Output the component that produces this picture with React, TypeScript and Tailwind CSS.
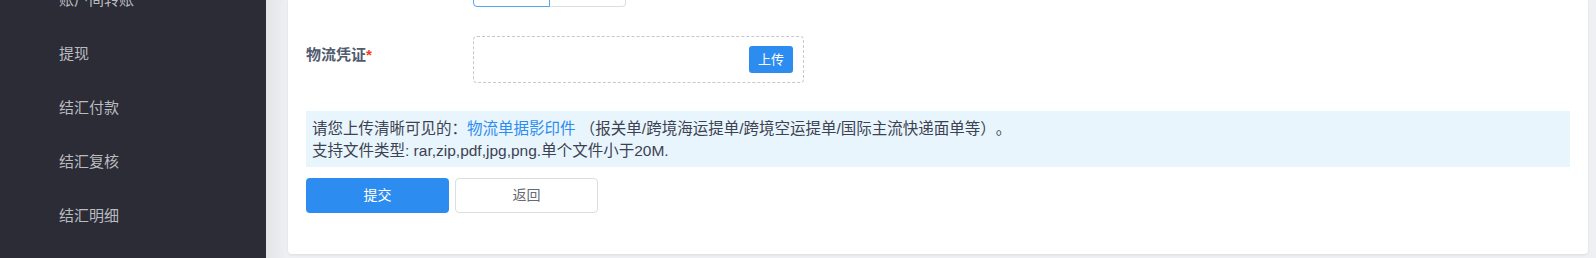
const menu = ["账户间转账", "提现", "结汇付款", "结汇复核", "结汇明细"]

export default function App() {
  return (
    <div className="flex h-[258px] w-[1596px] overflow-hidden font-['Liberation_Sans','Noto_Sans_CJK_SC',sans-serif]">
      {/* Sidebar */}
      <aside className="w-[266px] shrink-0 bg-[#2b2c35]">
        <ul className="-mt-[27px]">
          {menu.map((item) => (
            <li
              key={item}
              className="flex h-[54px] items-center pl-[59px] text-[15px] text-[#babbc0]"
            >
              {item}
            </li>
          ))}
        </ul>
      </aside>

      {/* Content */}
      <main className="flex-1 bg-[linear-gradient(to_right,#e3e4e8,#eef0f3_22px)] pr-[8px] pb-[4px] pl-[22px]">
        <div className="flex h-full flex-col rounded-b-[4px] bg-white pr-[18px] pl-[18px] shadow-[0_1px_3px_rgba(0,0,0,0.08)]">
          {/* previous field (cut off at top) */}
          <div className="-mt-[25px] flex pl-[167px]">
            <div className="flex h-[32px]">
              <div className="w-[77px] rounded-l-[4px] border border-[#57a3f3] bg-white" />
              <div className="w-[76px] rounded-r-[4px] border border-l-0 border-[#dcdee2] bg-white" />
            </div>
          </div>

          {/* 物流凭证 */}
          <div className="mt-[29px] flex">
            <label className="w-[167px] shrink-0 pt-[8px] text-[15px] leading-[22px] font-bold text-[#515a6e]">
              物流凭证<span className="text-[#ed4014]">*</span>
            </label>
            <div className="flex h-[47px] w-[331px] items-center justify-end rounded-[4px] border-[1.5px] border-dashed border-[#c5c8ce] pr-[10px]">
              <button className="h-[27px] w-[44px] rounded-[3px] bg-[#2d8cf0] text-[13px] text-white">
                上传
              </button>
            </div>
          </div>

          {/* notice */}
          <div className="mt-[28px] bg-[#e8f5fd] pt-[7px] pb-[5px] pl-[6px] text-[15.5px] leading-[22px] text-[#3d4250] [text-spacing-trim:space-all]">
            <p>
              请您上传清晰可见的：<span className="text-[#2d8cf0]">物流单据影印件</span>{" "}
              （报关单/跨境海运提单/跨境空运提单/国际主流快递面单等）。
            </p>
            <p>支持文件类型: rar,zip,pdf,jpg,png.单个文件小于20M.</p>
          </div>

          {/* actions */}
          <div className="mt-[11px] flex gap-[6px]">
            <button className="h-[35px] w-[143px] rounded-[4px] bg-[#2d8cf0] text-[14px] text-white">
              提交
            </button>
            <button className="h-[35px] w-[143px] rounded-[4px] border border-[#dcdee2] bg-white text-[14px] text-[#666a73]">
              返回
            </button>
          </div>
        </div>
      </main>
    </div>
  )
}
